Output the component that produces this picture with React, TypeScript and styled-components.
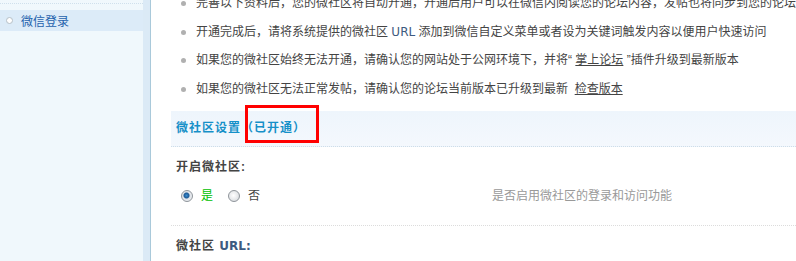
import React from 'react';
import styled, { createGlobalStyle } from 'styled-components';

const GlobalStyle = createGlobalStyle`
  html, body {
    margin: 0;
    padding: 0;
    background: #fff;
    overflow: hidden;
  }
  body {
    font-family: "Liberation Sans", "Noto Sans CJK SC", sans-serif;
    font-size: 12px;
    color: #444;
  }
`;

const App = () => {
  return (
    <>
      <GlobalStyle />
      <Page>
        <Sidebar>
          <SideList>
            <SideItem active>
              <SideDot />
              微信登录
            </SideItem>
          </SideList>
        </Sidebar>
        <Main>
          <Tips>
            <Tip>完善以下资料后，您的微社区将自动开通，开通后用户可以在微信内阅读您的论坛内容，发帖也将同步到您的论坛</Tip>
            <Tip>开通完成后，请将系统提供的微社区 <Latin>URL</Latin> 添加到微信自定义菜单或者设为关键词触发内容以便用户快速访问</Tip>
            <Tip>如果您的微社区始终无法开通，请确认您的网站处于公网环境下，并将“ <TipLink>掌上论坛</TipLink> ”插件升级到最新版本</Tip>
            <Tip>如果您的微社区无法正常发帖，请确认您的论坛当前版本已升级到最新 &nbsp;<TipLink>检查版本</TipLink></Tip>
          </Tips>
          <Section>
            <SectionHead>
              微社区设置<Status>（已开通）</Status>
            </SectionHead>
            <Field>
              <FieldLabel>开启微社区:</FieldLabel>
              <FieldRow>
                <Choices>
                  <Radio checked />
                  <ChoiceText yes>是</ChoiceText>
                  <Radio />
                  <ChoiceText>否</ChoiceText>
                </Choices>
                <FieldTip>是否启用微社区的登录和访问功能</FieldTip>
              </FieldRow>
            </Field>
            <Field>
              <FieldLabel>微社区 <Latin>URL:</Latin></FieldLabel>
            </Field>
          </Section>
          <Marker />
        </Main>
      </Page>
    </>
  );
};

interface ActiveProps {
  active?: boolean;
}

interface RadioProps {
  checked?: boolean;
}

interface ChoiceProps {
  yes?: boolean;
}

const Page = styled.div`
  display: flex;
  width: 796px;
  height: 261px;
  overflow: hidden;
`;

const Sidebar = styled.aside`
  flex: 0 0 auto;
  width: 143px;
  padding-right: 7px;
  background: #dbeaf6;
  border-right: 1px solid #a9c9da;
`;

const SideList = styled.ul`
  margin: 0;
  padding: 0;
  list-style: none;
  height: 100%;
  background: #f0f8fc;
  position: relative;
  padding-top: 10px;
  &:before {
    content: '';
    position: absolute;
    left: 0;
    right: 0;
    top: 3px;
    border-top: 1px dotted #cfe0ec;
  }
`;

const SideItem = styled.li<ActiveProps>`
  display: flex;
  align-items: center;
  height: 21px;
  padding-left: 6px;
  color: #1f62ad;
  font-size: 12px;
  background: ${(props) => (props.active ? '#dcebf8' : 'transparent')};
`;

const SideDot = styled.span`
  width: 5px;
  height: 5px;
  border: 1px solid #b5bfc7;
  border-radius: 50%;
  background: #fff;
  margin-right: 8px;
`;

const Main = styled.main`
  position: relative;
  flex: 1;
  min-width: 0;
  overflow: hidden;
`;

const Tips = styled.ul`
  margin: -11px 0 0 0;
  padding: 0 0 0 30px;
  list-style: none;
`;

const Tip = styled.li`
  position: relative;
  padding-left: 15px;
  line-height: 28.7px;
  white-space: nowrap;
  color: #444;
  &:before {
    content: '';
    position: absolute;
    left: 0;
    top: 12px;
    width: 5px;
    height: 5px;
    border-radius: 50%;
    background: #b0b0b0;
  }
`;

const Latin = styled.span`
  font-family: "DejaVu Sans", "Noto Sans CJK SC", sans-serif;
  font-size: 12px;
  color: #3d5a80;
  letter-spacing: 0;
`;

const TipLink = styled.a`
  color: #444;
  text-decoration: underline;
  cursor: pointer;
`;

const Section = styled.section`
  margin: 7px 0 0 20px;
`;

const SectionHead = styled.h3`
  margin: 0;
  height: 35px;
  line-height: 35px;
  padding-left: 5px;
  background: linear-gradient(#eef5fc, #f4f8fd);
  border-bottom: 1px dotted #cfdde8;
  font-size: 12px;
  font-weight: bold;
  letter-spacing: 1px;
  color: #1690c8;
`;

const Status = styled.span`
  color: #1690c8;
`;

const Field = styled.div`
  padding-left: 5px;
  & + & {
    border-top: 1px dotted #dcdcdc;
  }
`;

const FieldLabel = styled.div`
  padding: 11px 0 9px;
  line-height: 18px;
  font-weight: bold;
  letter-spacing: 1px;
  color: #444;
`;

const FieldRow = styled.div`
  display: grid;
  grid-template-columns: 316px 1fr;
  align-items: center;
  height: 22px;
  margin-bottom: 18px;
`;

const Choices = styled.div`
  display: flex;
  align-items: center;
`;

const Radio = styled.span<RadioProps>`
  box-sizing: border-box;
  width: 12px;
  height: 12px;
  margin: 0 8px 0 5px;
  border-radius: 50%;
  border: 1px solid #8f959b;
  background: ${(props) =>
    props.checked
      ? 'radial-gradient(circle at 45% 45%, #3c8ed0 0, #1d5a96 2.5px, #dfe3e8 3.5px, #f3f4f6 100%)'
      : 'radial-gradient(circle at 45% 45%, #ffffff 0, #e8eaec 4px, #cdd1d5 100%)'};
`;

const ChoiceText = styled.span<ChoiceProps>`
  color: ${(props) => (props.yes ? '#00c000' : '#444')};
  margin-right: ${(props) => (props.yes ? '10px' : '0')};
  line-height: 20px;
`;

const FieldTip = styled.div`
  color: #999;
  line-height: 20px;
`;

const Marker = styled.div`
  position: absolute;
  left: 94px;
  top: 105px;
  width: 74px;
  height: 38px;
  box-sizing: border-box;
  border: 3px solid #ff0000;
`;

export default App;
